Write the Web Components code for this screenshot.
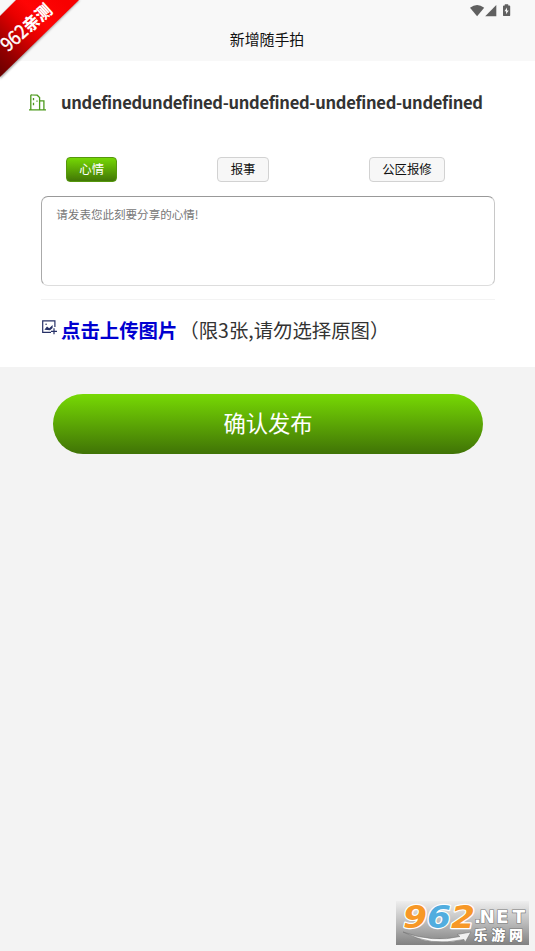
<!DOCTYPE html>
<html lang="zh-CN">
<head>
<meta charset="utf-8">
<title>新增随手拍</title>
<style>
html, body { margin: 0; height: 100%; overflow: hidden; }
body { background: #f3f3f3; color: #333; font-family: "Noto Sans CJK SC", sans-serif; }
</style>
</head>
<body>
<snap-page></snap-page>
<script>
const define = (name, html) => {
  const template = document.createElement('template');
  template.innerHTML = html;
  customElements.define(name, class extends HTMLElement {
    constructor() {
      super();
      this.attachShadow({ mode: 'open' }).append(template.content.cloneNode(true));
    }
  });
};

define('status-icons', `
<style>:host{display:block;width:42px;height:14px}svg{display:block}</style>
<svg width="42" height="14" viewBox="0 0 42 14" fill="#606060">
  <path d="M0 3.7Q7.1-1.6 14.2 3.7L7.1 12.2Z"/>
  <path d="M15.2 12.2L26.3 1V12.2Z"/>
  <path d="M34.8.2h3.4v1.2h1.1q.9 0 .9.9v8.9q0 .9-.9.9h-5.4q-.9 0-.9-.9V2.3q0-.9.9-.9h.9Z"/>
  <path d="M37 3.4L34.5 7.3h1.6v3L38.7 6.4h-1.7Z" fill="#fafafa"/>
</svg>`);

define('app-header', `
<style>
:host{display:flex;flex-direction:column;align-items:center;height:61px;background:#f8f8f8;color:#111}
status-icons{align-self:flex-end;margin:4px 23px 0 0}
h1{margin:10px 1px 0 0;font-size:14.9px;font-weight:400;line-height:22px}
</style>
<status-icons></status-icons><h1><slot></slot></h1>`);

define('corner-ribbon', `
<style>:host{position:absolute;left:0;top:0;width:82px;height:82px}svg{display:block;overflow:visible}
text{font-family:"Noto Sans CJK SC",sans-serif;fill:#fff}</style>
<svg width="82" height="82" viewBox="0 0 82 82">
  <defs>
    <linearGradient id="red" gradientUnits="userSpaceOnUse" x1="0" y1="78" x2="70" y2="8">
      <stop offset="0" stop-color="#600"/><stop offset=".22" stop-color="#900000"/><stop offset=".55" stop-color="#e90000"/><stop offset=".72" stop-color="#ff0505"/><stop offset="1" stop-color="#f80000"/>
    </linearGradient>
    <filter id="soft"><feGaussianBlur stdDeviation=".9"/></filter>
  </defs>
  <path d="M0 17L17 0H80L0 79Z" fill="#555" opacity=".55" filter="url(#soft)"/>
  <path d="M0 16L16 0H79L0 77Z" fill="url(#red)"/>
  <g transform="translate(8 52.6) rotate(-42)">
    <text x="0" y="0" font-size="19" textLength="29" lengthAdjust="spacingAndGlyphs" stroke="#fff" stroke-width=".4">962</text>
    <text x="29" y="0" font-size="17" font-weight="900" textLength="32" lengthAdjust="spacingAndGlyphs">亲测</text>
  </g>
</svg>`);

define('address-row', `
<style>
:host{display:flex;align-items:center;height:26px;padding-left:29px;gap:15px;font-size:16.6px;letter-spacing:-.31px;font-weight:700;line-height:26px;white-space:nowrap}
svg{flex:none;margin-top:1px}
</style>
<svg width="17" height="17" viewBox="0 0 17 17" fill="none" stroke="#4c9a1c" stroke-width="1.3">
  <path d="M0 15.9H17M1.8 15.5V1.5Q2 .8 3 .9L8.2 1.2 10.6 3.6V15.5M10.6 6.9H14.9V15.5"/>
  <path d="M4.5 4V6.3M4.5 8.8V11.3M8 6.5V7.7"/>
</svg><span><slot></slot></span>`);

define('tag-button', `
<style>
:host{display:block;box-sizing:border-box;height:25px;padding:0 12.3px;border:1px solid #d2d2d2;border-radius:4px;background:#f7f7f7;color:#111;font-size:12.4px;line-height:22px;white-space:nowrap}
:host([active]){border-color:#55970d;background:linear-gradient(#75d704,#427706);color:#fff}
</style><slot></slot>`);

define('tag-row', `
<style>:host{display:flex;justify-content:space-between;padding:0 90px 0 66px}</style><slot></slot>`);

define('mood-field', `
<style>
:host{display:block;box-sizing:border-box;height:90px;margin:0 40px 0 41px;padding:8px 14.3px;border:1px solid;border-color:#999 #c8c8c8 #ddd #aaa;border-radius:7px;color:#777;font-size:11.55px;line-height:18px}
</style><slot></slot>`);

define('upload-row', `
<style>
:host{display:flex;align-items:center;box-sizing:border-box;height:68px;margin:0 40px 0 41px;padding-bottom:8px;border-top:1px solid #f3f3f3;font-size:19.4px;line-height:30px;white-space:nowrap}
svg{flex:none;margin:-4px 4px 0 1px}
b{color:#0000d0}
span{margin-left:2px}
</style>
<svg width="15" height="15" viewBox="0 0 15 15" fill="none" stroke="#263066" stroke-width="1.2">
  <path d="M12.9 7V.9H.7V12.4H9M9 11.3H15M12 8.3V14.3"/>
  <path d="M2.4 9.8L5 6.5 7.2 8.3 10.6 5V8L8 10.2Z" fill="#263066" stroke="none"/>
  <circle cx="4.1" cy="4.3" r=".8" fill="#263066" stroke="none"/>
</svg><b><slot name="action"></slot></b><span><slot></slot></span>`);

define('submit-button', `
<style>
:host{display:block;height:60px;margin:27px 52px 0 53px;border-radius:30px;background:linear-gradient(#77d904,#407306);color:#fff;font-size:22.3px;line-height:57px;text-align:center}
</style><slot></slot>`);

define('site-mark', `
<style>:host{position:absolute;left:396px;top:901px;width:133px;height:44px}svg{display:block}</style>
<svg width="133" height="44" viewBox="0 0 133 44">
  <defs>
    <linearGradient id="bg" x2="0" y2="1"><stop offset="0" stop-color="#eee"/><stop offset=".5" stop-color="#bbb"/><stop offset="1" stop-color="#818181"/></linearGradient>
    <linearGradient id="swoosh"><stop offset="0" stop-color="#999"/><stop offset=".3" stop-color="#fff"/><stop offset="1" stop-color="#eee"/></linearGradient>
  </defs>
  <rect width="133" height="44" fill="url(#bg)"/>
  <path d="M7 31Q37 42 64 35.5L61 33.5 75 31 69 41.5 68 38.5Q34 46 7 31Z" fill="url(#swoosh)" stroke="#777" stroke-width=".6"/>
  <g font-family="DejaVu Sans,sans-serif" font-weight="700" font-style="italic" font-size="32" stroke="#fff" stroke-width="2.4" stroke-linejoin="round" paint-order="stroke">
    <text x="7" y="27.3" textLength="72" lengthAdjust="spacingAndGlyphs" fill="#f79827">9<tspan fill="#51addf">6</tspan>2</text>
  </g>
  <g fill="#fff" stroke="#777" stroke-width="1.2" paint-order="stroke">
    <text x="78 83.5 100 116.5" y="21.8" font-family="DejaVu Sans,sans-serif" font-weight="700" font-size="18.5">.NET</text>
    <text x="77.5 95.3 113" y="38.8" font-family="Noto Sans CJK SC,sans-serif" font-size="14" font-weight="900">乐游网</text>
  </g>
</svg>`);

define('snap-page', `
<style>
:host{display:block;position:relative;width:535px;height:951px;overflow:hidden;background:#f3f3f3}
main{display:flex;flex-direction:column;height:306px;background:#fff}
address-row{margin-top:28px}
tag-row{margin-top:42px}
mood-field{margin-top:14px}
upload-row{margin-top:13px}
</style>
<app-header>新增随手拍</app-header>
<main>
  <address-row>undefinedundefined-undefined-undefined-undefined</address-row>
  <tag-row><tag-button active>心情</tag-button><tag-button>报事</tag-button><tag-button>公区报修</tag-button></tag-row>
  <mood-field>请发表您此刻要分享的心情!</mood-field>
  <upload-row><span slot="action">点击上传图片</span>（限3张,请勿选择原图）</upload-row>
</main>
<submit-button>确认发布</submit-button>
<corner-ribbon></corner-ribbon>
<site-mark></site-mark>`);
</script>
</body>
</html>
